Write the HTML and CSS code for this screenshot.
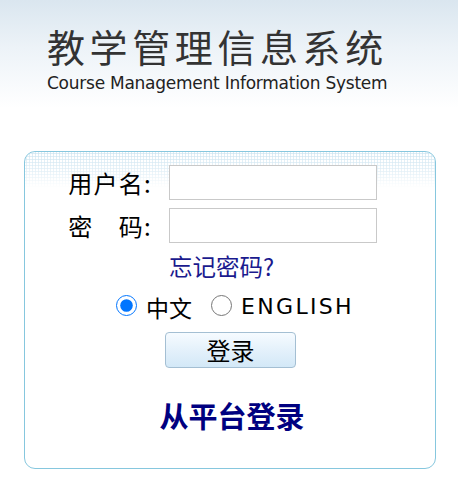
FILE: index.html
```html
<!DOCTYPE html>
<html lang="zh">
<head>
<meta charset="utf-8">
<title>教学管理信息系统</title>
<link rel="stylesheet" href="styles.css">
</head>
<body>
<div class="header">
  <div class="logo">
    <div class="logo-cn">教学管理信息系统</div>
    <div class="logo-en">Course Management Information System</div>
  </div>
</div>
<div class="box">
  <div class="content">
    <div class="row">
      <label class="label">用户名:</label>
      <input class="field" type="text">
    </div>
    <div class="row">
      <label class="label">密&emsp;码:</label>
      <input class="field" type="password">
    </div>
    <div class="forgot"><a href="#">忘记密码?</a></div>
    <div class="lang">
      <label class="opt"><input type="radio" name="lang" checked>中文</label>
      <label class="opt en"><input type="radio" name="lang">ENGLISH</label>
    </div>
    <div class="btnrow"><button class="btn">登录</button></div>
    <div class="platform"><a href="#">从平台登录</a></div>
  </div>
</div>
</body>
</html>
```
FILE: styles.css
```css
html, body {
  margin: 0;
  padding: 0;
  background: #fff;
}
body {
  font-family: "Noto Sans CJK SC", "DejaVu Sans", sans-serif;
  color: #000;
}
.header {
  height: 108px;
  background: linear-gradient(to bottom, #dae6ef 0%, #edf3f8 45%, #ffffff 100%);
  box-sizing: border-box;
  padding: 22px 0 0 47px;
}
.logo-cn {
  font-size: 38px;
  line-height: 48px;
  font-weight: 400;
  letter-spacing: 4.6px;
  color: #333;
  white-space: nowrap;
}
.logo-en {
  font-family: "DejaVu Sans", sans-serif;
  font-size: 17px;
  line-height: 20px;
  color: #222;
  letter-spacing: -0.25px;
  margin-top: 3px;
  white-space: nowrap;
}
.box {
  position: relative;
  margin: 43px 0 0 24px;
  width: 410px;
  height: 316px;
  border: 1px solid #86c7de;
  border-radius: 11px;
  overflow: hidden;
}
.box::before {
  content: "";
  position: absolute;
  left: 0;
  right: 0;
  top: 0;
  height: 36px;
  background-image: radial-gradient(circle, #cfe5f1 0.9px, transparent 1.3px);
  background-size: 3px 3px;
  -webkit-mask-image: linear-gradient(to bottom, #000 0%, rgba(0,0,0,0.6) 50%, transparent 100%);
  mask-image: linear-gradient(to bottom, #000 0%, rgba(0,0,0,0.6) 50%, transparent 100%);
}
.content {
  position: relative;
  padding-top: 13px;
}
.row {
  display: flex;
  align-items: center;
  margin-bottom: 8px;
}
.label {
  width: 144px;
  text-align: right;
  font-size: 24px;
  line-height: 30px;
  letter-spacing: 1.3px;
  padding-right: 17px;
  box-sizing: border-box;
  white-space: nowrap;
}
.field {
  width: 208px;
  height: 35px;
  box-sizing: border-box;
  border: 1px solid #c9c9c9;
  margin: 0;
  padding: 2px 4px;
  font-size: 16px;
}
.forgot {
  padding-left: 144px;
  margin-top: 1px;
  font-size: 23.5px;
  line-height: 31px;
}
.forgot a {
  color: #1a1a8e;
  text-decoration: none;
}
.lang {
  display: flex;
  justify-content: center;
  align-items: center;
  gap: 19px;
  margin-top: 8px;
  margin-left: 10px;
  font-size: 23px;
  line-height: 34px;
}
.opt {
  display: flex;
  align-items: center;
}
.opt input {
  width: 21px;
  height: 21px;
  margin: 0 9px 3px 0;
}
.opt.en {
  font-family: "DejaVu Sans", sans-serif;
  font-size: 22px;
  letter-spacing: 2.3px;
}
.btnrow {
  margin-top: 8px;
  padding-left: 140px;
}
.btn {
  width: 131px;
  height: 36px;
  box-sizing: border-box;
  border: 1px solid #a4bfd3;
  border-radius: 4px;
  background: linear-gradient(to bottom, #f6fbff 0%, #e4f1fb 50%, #d3e8f7 100%);
  font-family: "Noto Sans CJK SC", sans-serif;
  font-size: 24px;
  line-height: 32px;
  color: #000;
  padding: 0;
}
.platform {
  text-align: center;
  margin-top: 28px;
  margin-left: 4px;
  font-size: 29px;
  font-weight: bold;
  line-height: 38px;
}
.platform a {
  color: #000080;
  text-decoration: none;
}
```
